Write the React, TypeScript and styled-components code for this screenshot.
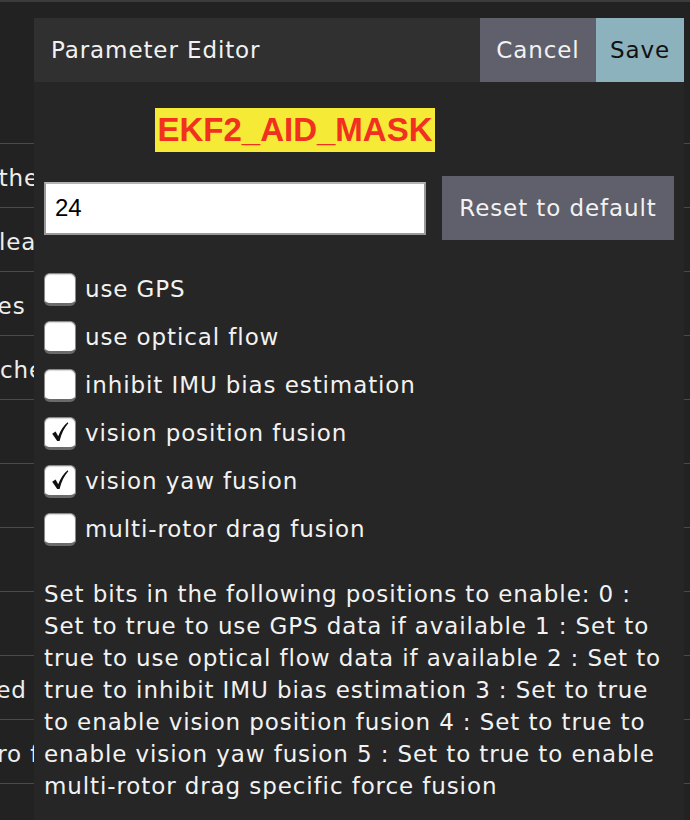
import styled, { createGlobalStyle } from "styled-components";

const GlobalStyle = createGlobalStyle`
  html, body {
    margin: 0;
    padding: 0;
    background: #222222;
    overflow: hidden;
  }
  body {
    font-family: "DejaVu Sans", "Liberation Sans", sans-serif;
  }
`;

// rows of the list page lying under the dialog; only their start shows
const bgRows = [
  { text: "Set the", shift: 50 },
  { text: "Clear", shift: 18 },
  { text: "Values", shift: 55 },
  { text: "Cache", shift: 32 },
  { text: "", shift: 0 },
  { text: "", shift: 0 },
  { text: "", shift: 0 },
  { text: "", shift: 0 },
  { text: "Advanced f", shift: 94 },
  { text: "Gyro f", shift: 36 },
];

const options = [
  { label: "use GPS", checked: false },
  { label: "use optical flow", checked: false },
  { label: "inhibit IMU bias estimation", checked: false },
  { label: "vision position fusion", checked: true },
  { label: "vision yaw fusion", checked: true },
  { label: "multi-rotor drag fusion", checked: false },
];

const description = [
  "Set bits in the following positions to enable: 0 :",
  "Set to true to use GPS data if available 1 : Set to",
  "true to use optical flow data if available 2 : Set to",
  "true to inhibit IMU bias estimation 3 : Set to true",
  "to enable vision position fusion 4 : Set to true to",
  "enable vision yaw fusion 5 : Set to true to enable",
  "multi-rotor drag specific force fusion",
];

const App = () => {
  return (
    <>
      <GlobalStyle />
      <Page>
        <TopBar />
        <PageHeader />
        <List>
          {bgRows.map((row, i) => (
            <ListRow key={i}>
              <RowText $shift={row.shift}>{row.text}</RowText>
            </ListRow>
          ))}
        </List>
        <Modal>
          <ModalHeader>
            <Title>Parameter Editor</Title>
            <HeaderButton $variant="cancel">Cancel</HeaderButton>
            <HeaderButton $variant="save">Save</HeaderButton>
          </ModalHeader>
          <ModalBody>
            <ParamName>
              <span>EKF2_AID_MASK</span>
            </ParamName>
            <ValueRow>
              <ValueInput defaultValue="24" />
              <ResetButton>Reset to default</ResetButton>
            </ValueRow>
            <Options>
              {options.map((opt) => (
                <OptionRow key={opt.label}>
                  <Box>
                    {opt.checked && (
                      <svg width="22" height="24" viewBox="0 0 22 24">
                        <path
                          d="M3.2 13.8 L6.6 11.6 L9.2 16.2 C11.5 10.3 14.6 5.8 18.6 2.3 L19.3 3.2 C15.2 7.8 12.4 13.6 10.6 21 L8.2 21 Z"
                          fill="#111"
                        />
                      </svg>
                    )}
                  </Box>
                  <OptionLabel>{opt.label}</OptionLabel>
                </OptionRow>
              ))}
            </Options>
            <Description>
              {description.map((line, i) => (
                <span key={i}>
                  {line}
                  {i < description.length - 1 && <br />}
                </span>
              ))}
            </Description>
          </ModalBody>
        </Modal>
      </Page>
    </>
  );
};

export default App;

const Page = styled.div`
  position: relative;
  width: 690px;
  height: 820px;
  background: #222222;
  overflow: hidden;
`;

const TopBar = styled.div`
  height: 2px;
  background: #3c3c3c;
`;

const PageHeader = styled.div`
  height: 141px;
  border-bottom: 1px solid #4a4a4a;
`;

const List = styled.div`
  display: flex;
  flex-direction: column;
`;

const ListRow = styled.div`
  height: 63px;
  border-bottom: 1px solid #4a4a4a;
  display: flex;
  align-items: center;
  overflow: hidden;
`;

const RowText = styled.span<{ $shift: number }>`
  margin-left: ${(p) => -p.$shift}px;
  padding-top: 4px;
  color: #eeeeee;
  font-size: 23px;
  letter-spacing: 0.9px;
  white-space: nowrap;
`;

const Modal = styled.div`
  position: absolute;
  left: 34px;
  top: 18px;
  width: 650px;
  bottom: 0;
  background: #262626;
  display: flex;
  flex-direction: column;
  font-size: 23px;
  letter-spacing: 0.9px;
`;

const ModalHeader = styled.div`
  height: 64px;
  background: #303030;
  display: flex;
  align-items: stretch;
`;

const Title = styled.div`
  flex: 1;
  display: flex;
  align-items: center;
  padding-left: 17px;
  color: #f2f2f2;
`;

const HeaderButton = styled.div<{ $variant: "cancel" | "save" }>`
  display: flex;
  align-items: center;
  justify-content: center;
  width: ${(p) => (p.$variant === "cancel" ? "116px" : "88px")};
  background: ${(p) => (p.$variant === "cancel" ? "#605f6c" : "#8bb2bd")};
  color: ${(p) => (p.$variant === "cancel" ? "#f2f2f2" : "#111111")};
`;

const ModalBody = styled.div`
  padding: 26px 10px 0 10px;
  display: flex;
  flex-direction: column;
`;

const ParamName = styled.div`
  display: flex;
  justify-content: center;
  padding-right: 128px;

  span {
    background: #f5ea36;
    color: #f2301f;
    font-family: "Liberation Sans", Arial, sans-serif;
    font-weight: 700;
    font-size: 33px;
    letter-spacing: 0;
    line-height: 44px;
    padding: 0 2px;
  }
`;

const ValueRow = styled.div`
  margin-top: 24px;
  display: flex;
  align-items: center;
  gap: 16px;
`;

const ValueInput = styled.input`
  box-sizing: border-box;
  width: 382px;
  height: 53px;
  border: 2px solid #9a9a9a;
  border-top-color: #b5b5b5;
  background: #ffffff;
  padding: 0 9px;
  font-family: "Liberation Sans", Arial, sans-serif;
  font-size: 24px;
  color: #000;
  outline: none;
`;

const ResetButton = styled.div`
  flex: 1;
  height: 64px;
  display: flex;
  align-items: center;
  justify-content: center;
  background: #605f6c;
  color: #f2f2f2;
`;

const Options = styled.div`
  margin-top: 25px;
  display: flex;
  flex-direction: column;
`;

const OptionRow = styled.div`
  height: 48px;
  display: flex;
  align-items: center;
  gap: 9px;
`;

const Box = styled.span`
  box-sizing: border-box;
  width: 32px;
  height: 33px;
  border-radius: 6px;
  background: #ffffff;
  border: 1px solid #8a8a8a;
  border-bottom: 3px solid #6a6a6a;
  box-shadow: inset 0 1px 1px rgba(0, 0, 0, 0.15);
  display: flex;
  align-items: center;
  justify-content: center;
`;

const OptionLabel = styled.span`
  color: #f2f2f2;
`;

const Description = styled.div`
  margin-top: 25px;
  color: #f2f2f2;
  line-height: 32px;
  white-space: nowrap;
`;
